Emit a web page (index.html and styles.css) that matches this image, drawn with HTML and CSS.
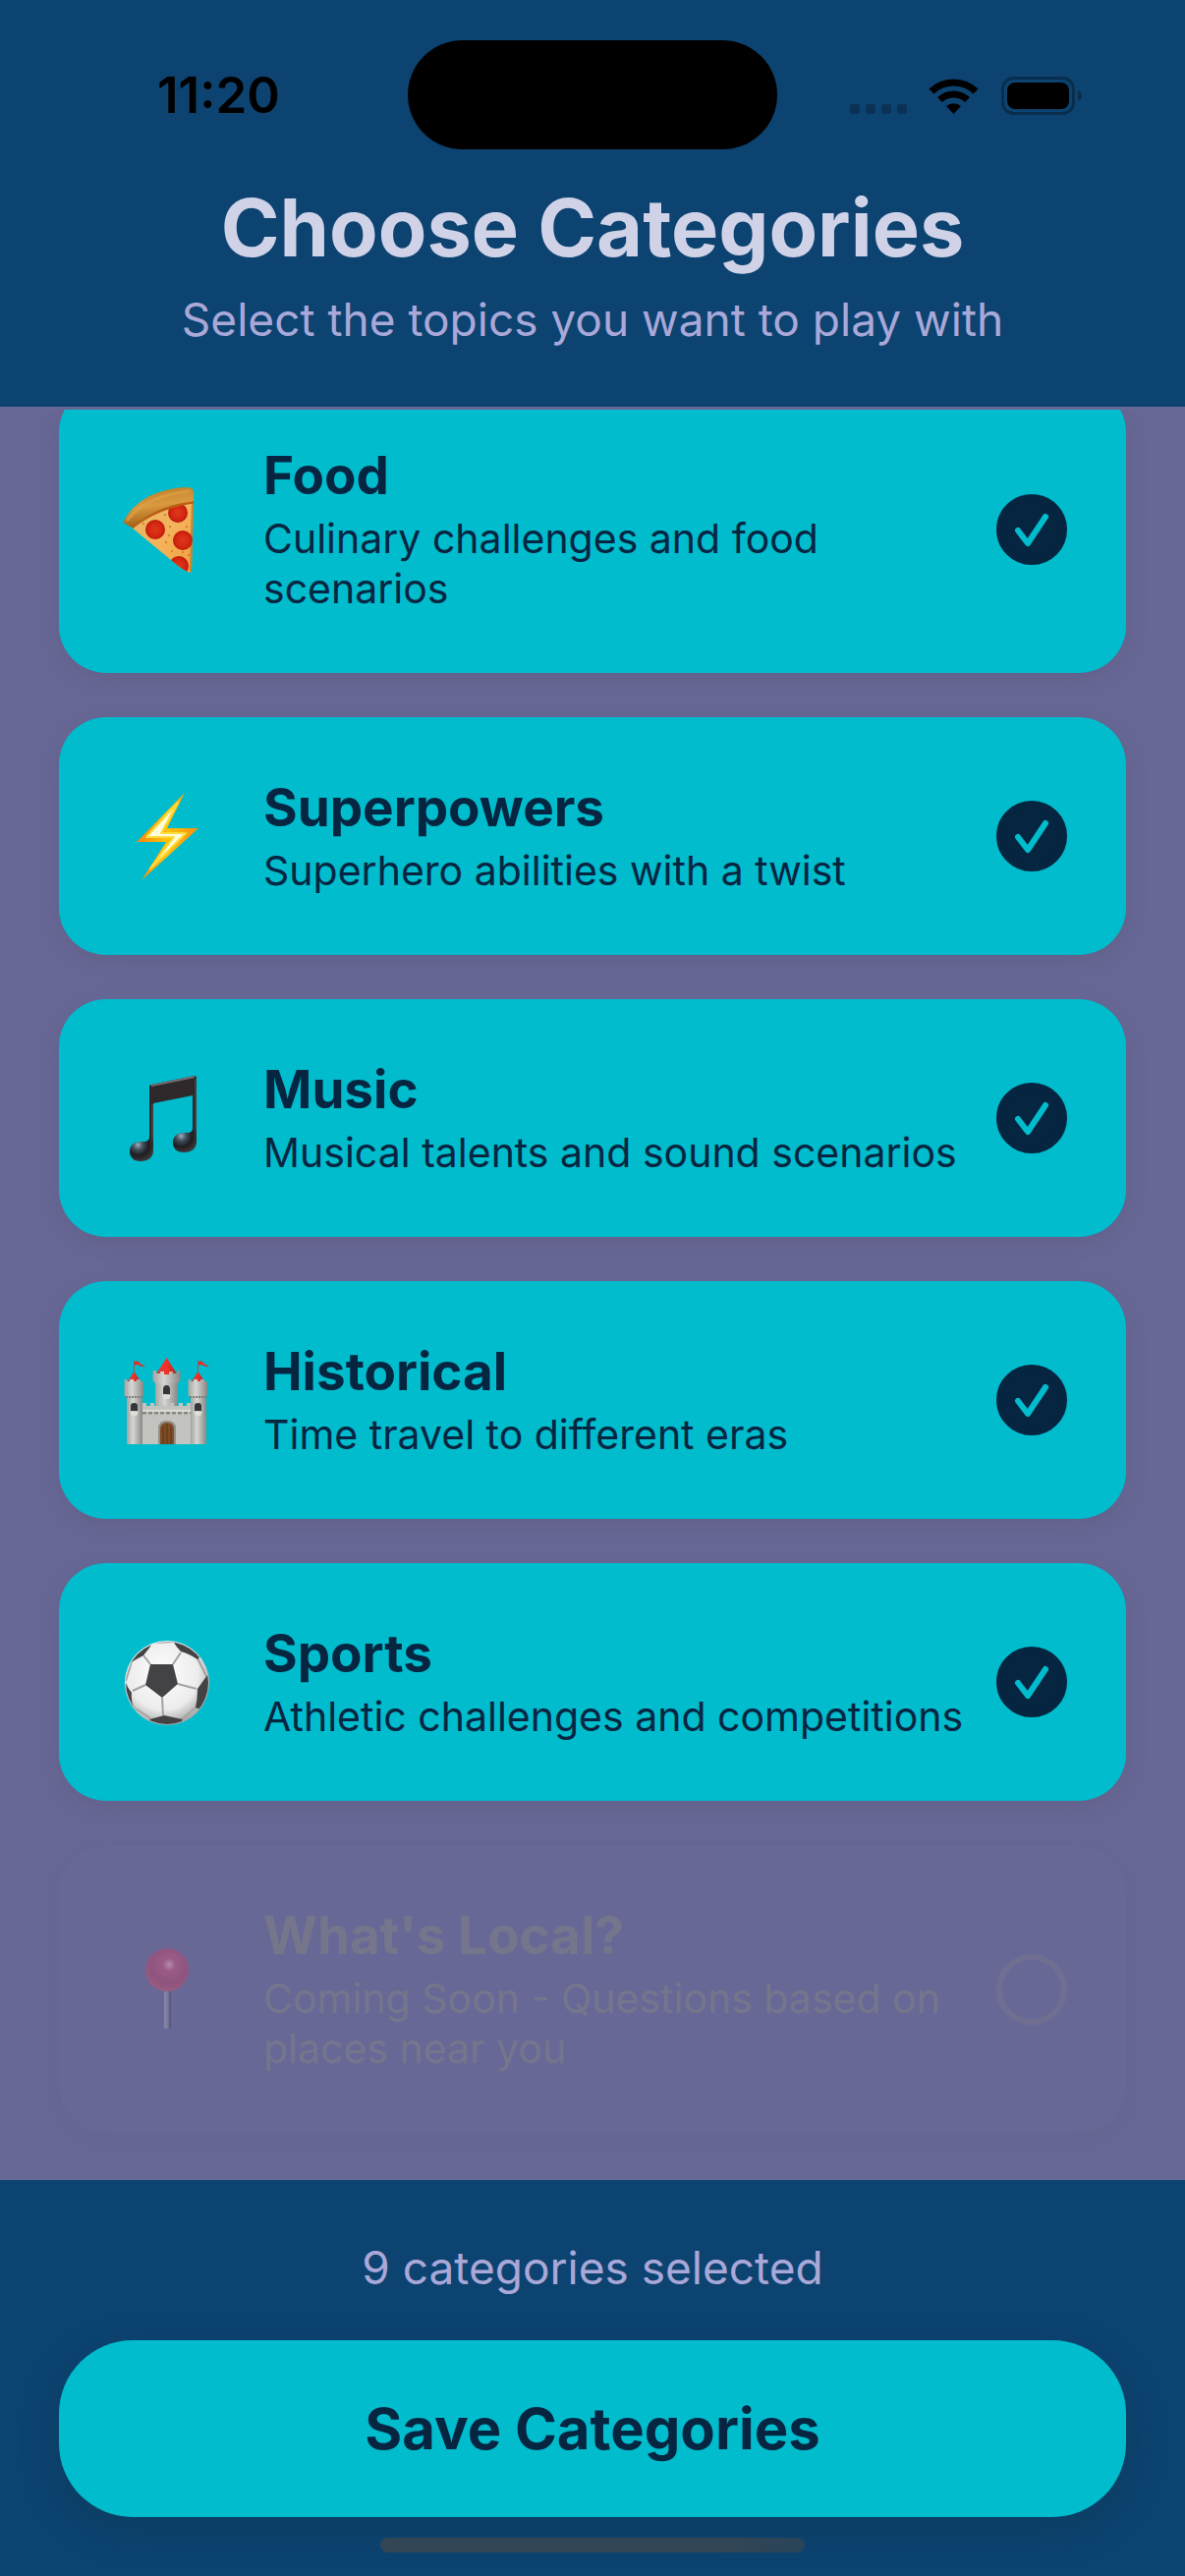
FILE: index.html
```html
<!DOCTYPE html>
<html lang="en">
<head>
<meta charset="utf-8">
<meta name="viewport" content="width=device-width, initial-scale=1">
<title>Choose Categories</title>
<link rel="stylesheet" href="styles.css">
</head>
<body>
<header class="header">
  <div class="status">
    <span class="time">11:20</span>
    <span class="island"></span>
    <span class="indicators">
      <svg width="58" height="40" viewBox="0 0 58 40" fill="#0b3155" aria-hidden="true">
        <rect x="0" y="29" width="10" height="10" rx="3"/><rect x="16" y="29" width="10" height="10" rx="3"/><rect x="32" y="29" width="10" height="10" rx="3"/><rect x="48" y="29" width="10" height="10" rx="3"/>
      </svg>
      <svg width="52" height="40" viewBox="0 0 52 40" aria-hidden="true">
        <path d="M.5 13.500a36 36 0 0 1 50 0l-5 5a29 29 0 0 0-40 0z"/>
        <path d="M9 22a24 24 0 0 1 33 0l-5 5a17 17 0 0 0-23 0z"/>
        <path d="M18 31a11.500 11.500 0 0 1 15 0l-7.500 8z"/>
      </svg>
      <svg width="82" height="40" viewBox="0 0 82 40" aria-hidden="true">
        <rect x="1.500" y="2.500" width="72" height="36" rx="11" fill="none" stroke="#092d4c" stroke-width="3"/>
        <rect x="6" y="7" width="63" height="27" rx="8"/>
        <path d="M78 15q4 2 4 5.500t-4 5.500z" fill="#092d4c"/>
      </svg>
    </span>
  </div>
  <h1 class="title">Choose Categories</h1>
  <p class="note">Select the topics you want to play with</p>
</header>

<main class="list">
  <label class="card">
    <svg class="emoji" viewBox="0 0 100 100" aria-hidden="true">
      <defs>
        <linearGradient id="cheese" x1="0" y1="0" x2="1" y2="1"><stop offset="0" stop-color="#e2b565"/><stop offset=".5" stop-color="#f3b45c"/><stop offset="1" stop-color="#f0a040"/></linearGradient>
        <linearGradient id="crust" x1=".3" y1="0" x2=".55" y2="1"><stop offset="0" stop-color="#bd7a22"/><stop offset=".45" stop-color="#d99a3f"/><stop offset="1" stop-color="#94540f"/></linearGradient>
        <radialGradient id="pepperoni"><stop offset="0" stop-color="#dc3a1c"/><stop offset=".75" stop-color="#d32410"/><stop offset="1" stop-color="#b91708"/></radialGradient>
        <clipPath id="slice"><path d="M14 48Q39 24 77 20L75 92Q74 95 71 93Q66 91 60 86Z"/></clipPath>
      </defs>
      <path d="M14 48Q39 24 77 20L75 92Q74 95 71 93Q66 91 60 86Z" fill="url(#cheese)"/>
      <path d="M76 22L74 93" stroke="#c9822c" stroke-width="2"/>
      <g clip-path="url(#slice)">
        <circle cx="61" cy="33" r="10" fill="url(#pepperoni)"/><circle cx="38" cy="50" r="10" fill="url(#pepperoni)"/><circle cx="66" cy="61" r="10" fill="url(#pepperoni)"/><circle cx="62" cy="87" r="10" fill="url(#pepperoni)"/>
        <path d="M14 48Q40 27 77 22" fill="none" stroke="#ba5c14" stroke-width="3"/>
        <g fill="#dc6a28"><circle cx="48" cy="35" r="1"/><circle cx="53" cy="47" r="1"/><circle cx="70" cy="47" r="1"/><circle cx="49" cy="63" r="1"/><circle cx="55" cy="72" r="1"/><circle cx="72" cy="76" r="1"/><circle cx="26" cy="44" r="1"/><circle cx="52" cy="56" r="1"/><circle cx="66" cy="73" r="1"/></g>
      </g>
      <path d="M6 41Q23 10 69 7Q77 7 77 11L77 18Q77 22 73 22Q38 26 15 48Q5 44 6 41Z" fill="url(#crust)"/>
      <path d="M10 40Q28 16 72 11" fill="none" stroke="#dba14a" stroke-width="3" stroke-linecap="round" opacity=".7"/>
    </svg>
    <span class="text"><span class="name">Food</span><span class="desc">Culinary challenges and food scenarios</span></span>
    <span class="tick"><input class="box" type="checkbox" checked><svg class="mark" viewBox="0 0 72 72" aria-hidden="true"><path d="M22 37L32 50L50 23"/></svg></span>
  </label>

  <label class="card">
    <svg class="emoji" viewBox="0 0 100 100" aria-hidden="true">
      <defs><linearGradient id="bolt" x1="0" y1="0" x2="1" y2="0"><stop offset="0" stop-color="#f7860a"/><stop offset=".5" stop-color="#ffc20e"/><stop offset="1" stop-color="#f7900c"/></linearGradient></defs>
      <path d="M68 6L50 42H82L24 95L49 56H19Z" fill="url(#bolt)"/>
      <path d="M61 16L44 47H69L33 83L57 51H29Z" fill="#fffde0" stroke="#ffdc3c" stroke-width="2" stroke-linejoin="round"/>
    </svg>
    <span class="text"><span class="name">Superpowers</span><span class="desc">Superhero abilities with a twist</span></span>
    <span class="tick"><input class="box" type="checkbox" checked><svg class="mark" viewBox="0 0 72 72" aria-hidden="true"><path d="M22 37L32 50L50 23"/></svg></span>
  </label>

  <label class="card">
    <svg class="emoji" viewBox="0 0 100 100" aria-hidden="true">
      <defs>
        <radialGradient id="note-head" cx=".35" cy=".3" r=".7"><stop offset="0" stop-color="#9fb0bb"/><stop offset=".3" stop-color="#41515d"/><stop offset=".65" stop-color="#1d1d20"/><stop offset="1" stop-color="#3b3538"/></radialGradient>
      </defs>
      <path d="M32 18Q32 16 34 16L78 7Q80 7 80 9V75H76V27L36 35V83H32Z" fill="#2f282b"/>
      <path d="M34 17L78 8" stroke="#746d72" stroke-width="2"/>
      <path d="M79 10V66M35 36V74" stroke="#5b5357" stroke-width="1"/>
      <path d="M36 72V83C36 90 31 94 23 94C16 94 12 90 12 84C12 77 17 74 24 74C29 74 31 74 32 70Z" fill="url(#note-head)"/>
      <path d="M80 63V74C80 81 75 85 67 85C60 85 56 81 56 75C56 68 61 65 68 65C73 65 75 65 76 61Z" fill="url(#note-head)"/>
    </svg>
    <span class="text"><span class="name">Music</span><span class="desc">Musical talents and sound scenarios</span></span>
    <span class="tick"><input class="box" type="checkbox" checked><svg class="mark" viewBox="0 0 72 72" aria-hidden="true"><path d="M22 37L32 50L50 23"/></svg></span>
  </label>

  <label class="card">
    <svg class="emoji" viewBox="0 0 100 100" aria-hidden="true">
      <defs>
        <linearGradient id="stone"><stop offset="0" stop-color="#a3a39f"/><stop offset=".4" stop-color="#d6d6d2"/><stop offset="1" stop-color="#888985"/></linearGradient>
        <linearGradient id="roof"><stop offset="0" stop-color="#d93a33"/><stop offset=".5" stop-color="#f0322b"/><stop offset="1" stop-color="#b91a17"/></linearGradient>
      </defs>
      <path d="M38 30H61V58H38Z" fill="url(#stone)"/>
      <path d="M49.500 7L61 25H38Z" fill="url(#roof)"/>
      <path d="M35.500 20H39V23H43V21H47V24H52V21H56V23H60V20H63.500V30L61 33H38L35.500 30Z" fill="url(#stone)"/>
      <path d="M25 56V53H29V56H33V53H37V56H42V53H46V56H53V53H57V56H62V53H66V56H70V53H74V95H25Z" fill="#c3c4c0"/>
      <path d="M25 63H74" stroke="#85867f" stroke-width="3" stroke-dasharray="4 2"/>
      <path d="M25 61H74" stroke="#dadbd6" stroke-width="2"/>
      <path d="M41 95V79Q41 71 50 71Q59 71 59 79V95Z" fill="#929089"/>
      <path d="M43 95V80Q43 73 50 73Q57 73 57 80V95Z" fill="#7e4c25"/>
      <path d="M46 77V95M50 74V95M54 77V95" stroke="#5f3415" stroke-width="1"/>
      <path d="M46 44V39Q46 35 49.500 35Q53 35 53 39V44Z" fill="#34363a"/><path d="M45 45H54L52 49H47Z" fill="#dedfd9"/>
      <g id="tower">
        <path d="M9 46H25V95H9Z" fill="url(#stone)"/>
        <path d="M16.500 21L23 31H10Z" fill="url(#roof)"/>
        <path d="M16.500 22V10" stroke="#8b5f5c" stroke-width="1"/>
        <path d="M17 11Q20 9 22 12T28 15Q25 17 22 15T17 15Z" fill="#e22f2a"/>
        <path d="M6.500 29H9V31H12V29H16V31H19V29H23V31H26V45L24 48H9L6.500 45Z" fill="url(#stone)"/>
        <path d="M8 47H25" stroke="#7d7d79" stroke-width="2" stroke-dasharray="2 1"/>
        <path d="M13 61V56Q13 53 16.500 53Q20 53 20 56V61Z" fill="#34363a"/><path d="M12 62H21L19 66H14Z" fill="#dedfd9"/>
      </g>
      <use href="#tower" x="65"/>
    </svg>
    <span class="text"><span class="name">Historical</span><span class="desc">Time travel to different eras</span></span>
    <span class="tick"><input class="box" type="checkbox" checked><svg class="mark" viewBox="0 0 72 72" aria-hidden="true"><path d="M22 37L32 50L50 23"/></svg></span>
  </label>

  <label class="card">
    <svg class="emoji" viewBox="0 0 100 100" aria-hidden="true">
      <defs>
        <radialGradient id="ball" cx=".45" cy=".4" r=".6"><stop offset="0" stop-color="#fff"/><stop offset=".7" stop-color="#ececec"/><stop offset="1" stop-color="#a8a8a8"/></radialGradient>
        <clipPath id="ball-clip"><circle cx="50" cy="51" r="42"/></clipPath>
      </defs>
      <circle cx="50" cy="51" r="43" fill="url(#ball)"/>
      <g clip-path="url(#ball-clip)">
        <path d="M33 32L26 23M56 32L64 20M61 52L80 57M45 66L46 84M28 53L15 59M81 26L90 44M80 75L65 88M33 87L15 75M14 29L8 49M35 10L56 9" fill="none" stroke="#a3a3a3" stroke-width="2"/>
        <path d="M33 32L56 32L61 52L45 66L28 53ZM12 31Q18 27 26 23Q32 16 36 9L24 8L8 20ZM56 8Q59 14 64 19Q72 21 81 27L88 20L66 2ZM91 43Q86 50 81 57Q81 67 79 76L90 80L98 50ZM32 88Q40 86 47 84Q56 86 66 88L60 98H40ZM7 48Q9 55 14 61Q13 68 16 76L4 76V50Z" fill="#434345"/>
      </g>
    </svg>
    <span class="text"><span class="name">Sports</span><span class="desc">Athletic challenges and competitions</span></span>
    <span class="tick"><input class="box" type="checkbox" checked><svg class="mark" viewBox="0 0 72 72" aria-hidden="true"><path d="M22 37L32 50L50 23"/></svg></span>
  </label>

  <label class="card card-soon">
    <svg class="emoji" viewBox="0 0 100 100" aria-hidden="true">
      <defs>
        <radialGradient id="pin" cx=".55" cy=".38" r=".6"><stop offset="0" stop-color="#b48aac"/><stop offset=".25" stop-color="#9a5c86"/><stop offset=".7" stop-color="#8d547f"/><stop offset="1" stop-color="#995b80"/></radialGradient>
        <linearGradient id="needle"><stop offset="0" stop-color="#8a88a6"/><stop offset=".5" stop-color="#7c7a9b"/><stop offset="1" stop-color="#504f7e"/></linearGradient>
      </defs>
      <path d="M47 48H54V89Q50.500 91 47 89Z" fill="url(#needle)"/>
      <circle cx="50" cy="30" r="22" fill="url(#pin)"/>
    </svg>
    <span class="text"><span class="name">What's Local?</span><span class="desc">Coming Soon - Questions based on places near you</span></span>
    <span class="tick"><input class="box" type="checkbox" disabled></span>
  </label>
</main>

<footer class="footer">
  <p class="note">9 categories selected</p>
  <button class="save" type="button">Save Categories</button>
  <span class="home"></span>
</footer>
</body>
</html>
```
FILE: styles.css
```css
:root {
  --navy: #0c4370;
  --purple: #686897;
  --cyan: #00bccd;
  --ink: #062541;
}

* { box-sizing: border-box; }

body {
  margin: 0;
  height: 100vh;
  display: flex;
  flex-direction: column;
  background: var(--purple);
  font-family: Inter, "Liberation Sans", sans-serif;
  color: var(--ink);
}

.header {
  padding: 41px 60px 60px;
  background: var(--navy);
  text-align: center;
}

.status {
  display: grid;
  grid-template-columns: 1fr 376px 1fr;
  align-items: center;
  margin-bottom: 30px;
  color: #000;
}

.time {
  padding-left: 100px;
  font-size: 51px;
  line-height: 60px;
  font-weight: 600;
  text-align: left;
}

.island {
  height: 111px;
  border-radius: 56px;
  background: #000;
}

.indicators {
  display: flex;
  justify-content: flex-end;
  gap: 22px;
  padding-right: 45px;
}

.title {
  margin: 0 0 14px;
  font-size: 81px;
  line-height: 100px;
  font-weight: 700;
  color: #d0d2e8;
}

.note {
  margin: 0;
  font-size: 46px;
  line-height: 58px;
  color: #a9a8d8;
}

/* The list rests at its end, so the first card runs under the header. */
.list {
  flex: 1;
  min-height: 0;
  margin-top: 3px;
  padding: 0 60px 48px;
  display: flex;
  flex-direction: column;
  justify-content: flex-end;
  gap: 45px;
  overflow: hidden;
}

.card {
  flex: none;
  display: flex;
  align-items: center;
  padding: 60px;
  border-radius: 48px;
  background: var(--cyan);
  box-shadow: 0 6px 24px rgba(60, 50, 60, .14);
}

.emoji {
  flex: none;
  width: 100px;
  height: 100px;
  margin-right: 48px;
}

.text {
  flex: 1;
  display: flex;
  flex-direction: column;
  gap: 6px;
}

.name {
  font-size: 53px;
  line-height: 65px;
  font-weight: 700;
}

.desc {
  font-size: 41px;
  line-height: 51px;
}

.tick {
  flex: none;
  display: grid;
  margin-left: 24px;
}

.tick > * { grid-area: 1 / 1; }

.box {
  appearance: none;
  width: 72px;
  height: 72px;
  margin: 0;
  border: 6px solid var(--ink);
  border-radius: 50%;
}

.box:checked { background: var(--ink); }

.mark {
  width: 72px;
  height: 72px;
  fill: none;
  stroke: var(--cyan);
  stroke-width: 6px;
  stroke-linecap: round;
  stroke-linejoin: round;
  pointer-events: none;
}

.card-soon {
  background: var(--purple);
  box-shadow: 0 6px 24px rgba(60, 50, 60, .05);
  color: #75758c;
}

.card-soon .box { border-color: #706f92; }

.footer {
  position: relative;
  padding: 60px;
  background: var(--navy);
  text-align: center;
}

.save {
  display: block;
  width: 100%;
  margin-top: 45px;
  padding: 54px;
  border: 0;
  border-radius: 75px;
  background: var(--cyan);
  box-shadow: 0 12px 36px rgba(16, 56, 80, .45);
  color: var(--ink);
  font: 700 58px/72px Inter, "Liberation Sans", sans-serif;
}

.home {
  position: absolute;
  left: 50%;
  bottom: 24px;
  width: 432px;
  height: 15px;
  margin-left: -216px;
  border-radius: 8px;
  background: linear-gradient(90deg, #334655 80%, #294459);
}
```
